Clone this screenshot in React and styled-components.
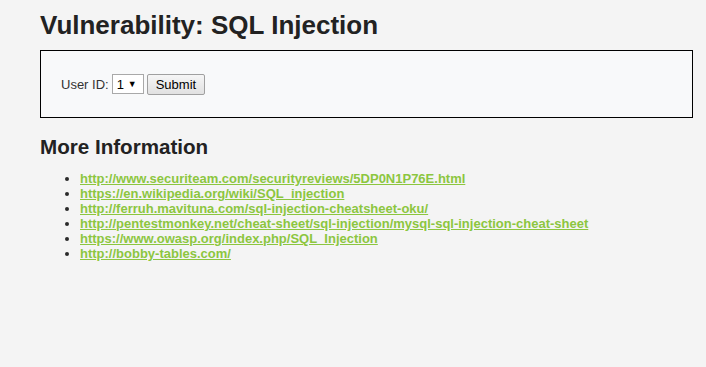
import styled, { createGlobalStyle } from 'styled-components';

const Global = createGlobalStyle`
  html, body {
    margin: 0;
    padding: 0;
    background: #f4f4f4;
    font-family: "Liberation Sans", Arial, sans-serif;
    color: #2a2a2a;
  }
`;

const Page = styled.div`
  padding: 0 13px 0 40px;
`;

const Title = styled.h1`
  margin: 0;
  padding-top: 10px;
  font-size: 26px;
  font-weight: bold;
  line-height: 30px;
  color: #222;
`;

const FormBox = styled.div`
  margin-top: 10px;
  height: 66px;
  border: 1px solid #000;
  background: #f8f9fa;
  display: flex;
  align-items: center;
  padding-left: 20px;
`;

const Label = styled.span`
  font-size: 13px;
  color: #333;
  margin-right: 3px;
`;

const SelectWrap = styled.span`
  position: relative;
  display: inline-block;
  margin-right: 3px;
`;

const Select = styled.select`
  appearance: none;
  -webkit-appearance: none;
  font-family: "Liberation Sans", Arial, sans-serif;
  font-size: 13px;
  color: #000;
  height: 20px;
  width: 32px;
  margin: 0;
  padding: 0 0 0 4px;
  border: 1px solid #a9a9a9;
  border-radius: 0;
  background: #fff;
  display: block;
`;

const Arrow = styled.span`
  position: absolute;
  right: 7px;
  top: 4px;
  font-size: 9px;
  line-height: 12px;
  color: #000;
  pointer-events: none;
`;

const Button = styled.button`
  font-family: "Liberation Sans", Arial, sans-serif;
  font-size: 13px;
  height: 21px;
  padding: 0 8px;
  border: 1px solid #a0a0a0;
  border-radius: 2px;
  background: linear-gradient(#f6f6f6, #e1e1e1);
  color: #000;
`;

const Subtitle = styled.h2`
  margin: 17px 0 0;
  font-size: 20.6px;
  line-height: 24px;
  font-weight: bold;
  color: #222;
`;

const List = styled.ul`
  margin: 12px 0 0;
  padding-left: 40px;
  font-size: 13px;
  line-height: 15px;
`;

const Link = styled.a`
  color: #8cc63f;
  font-weight: bold;
  text-decoration: underline;
`;

const links = [
  'http://www.securiteam.com/securityreviews/5DP0N1P76E.html',
  'https://en.wikipedia.org/wiki/SQL_injection',
  'http://ferruh.mavituna.com/sql-injection-cheatsheet-oku/',
  'http://pentestmonkey.net/cheat-sheet/sql-injection/mysql-sql-injection-cheat-sheet',
  'https://www.owasp.org/index.php/SQL_Injection',
  'http://bobby-tables.com/',
];

const App = () => {
  return (
    <Page>
      <Global />
      <Title>Vulnerability: SQL Injection</Title>
      <FormBox>
        <Label>User ID:</Label>
        <SelectWrap>
          <Select defaultValue="1">
            <option value="1">1</option>
          </Select>
          <Arrow>▼</Arrow>
        </SelectWrap>
        <Button>Submit</Button>
      </FormBox>
      <Subtitle>More Information</Subtitle>
      <List>
        {links.map((l) => (
          <li key={l}>
            <Link href={l}>{l}</Link>
          </li>
        ))}
      </List>
    </Page>
  );
};

export default App;
